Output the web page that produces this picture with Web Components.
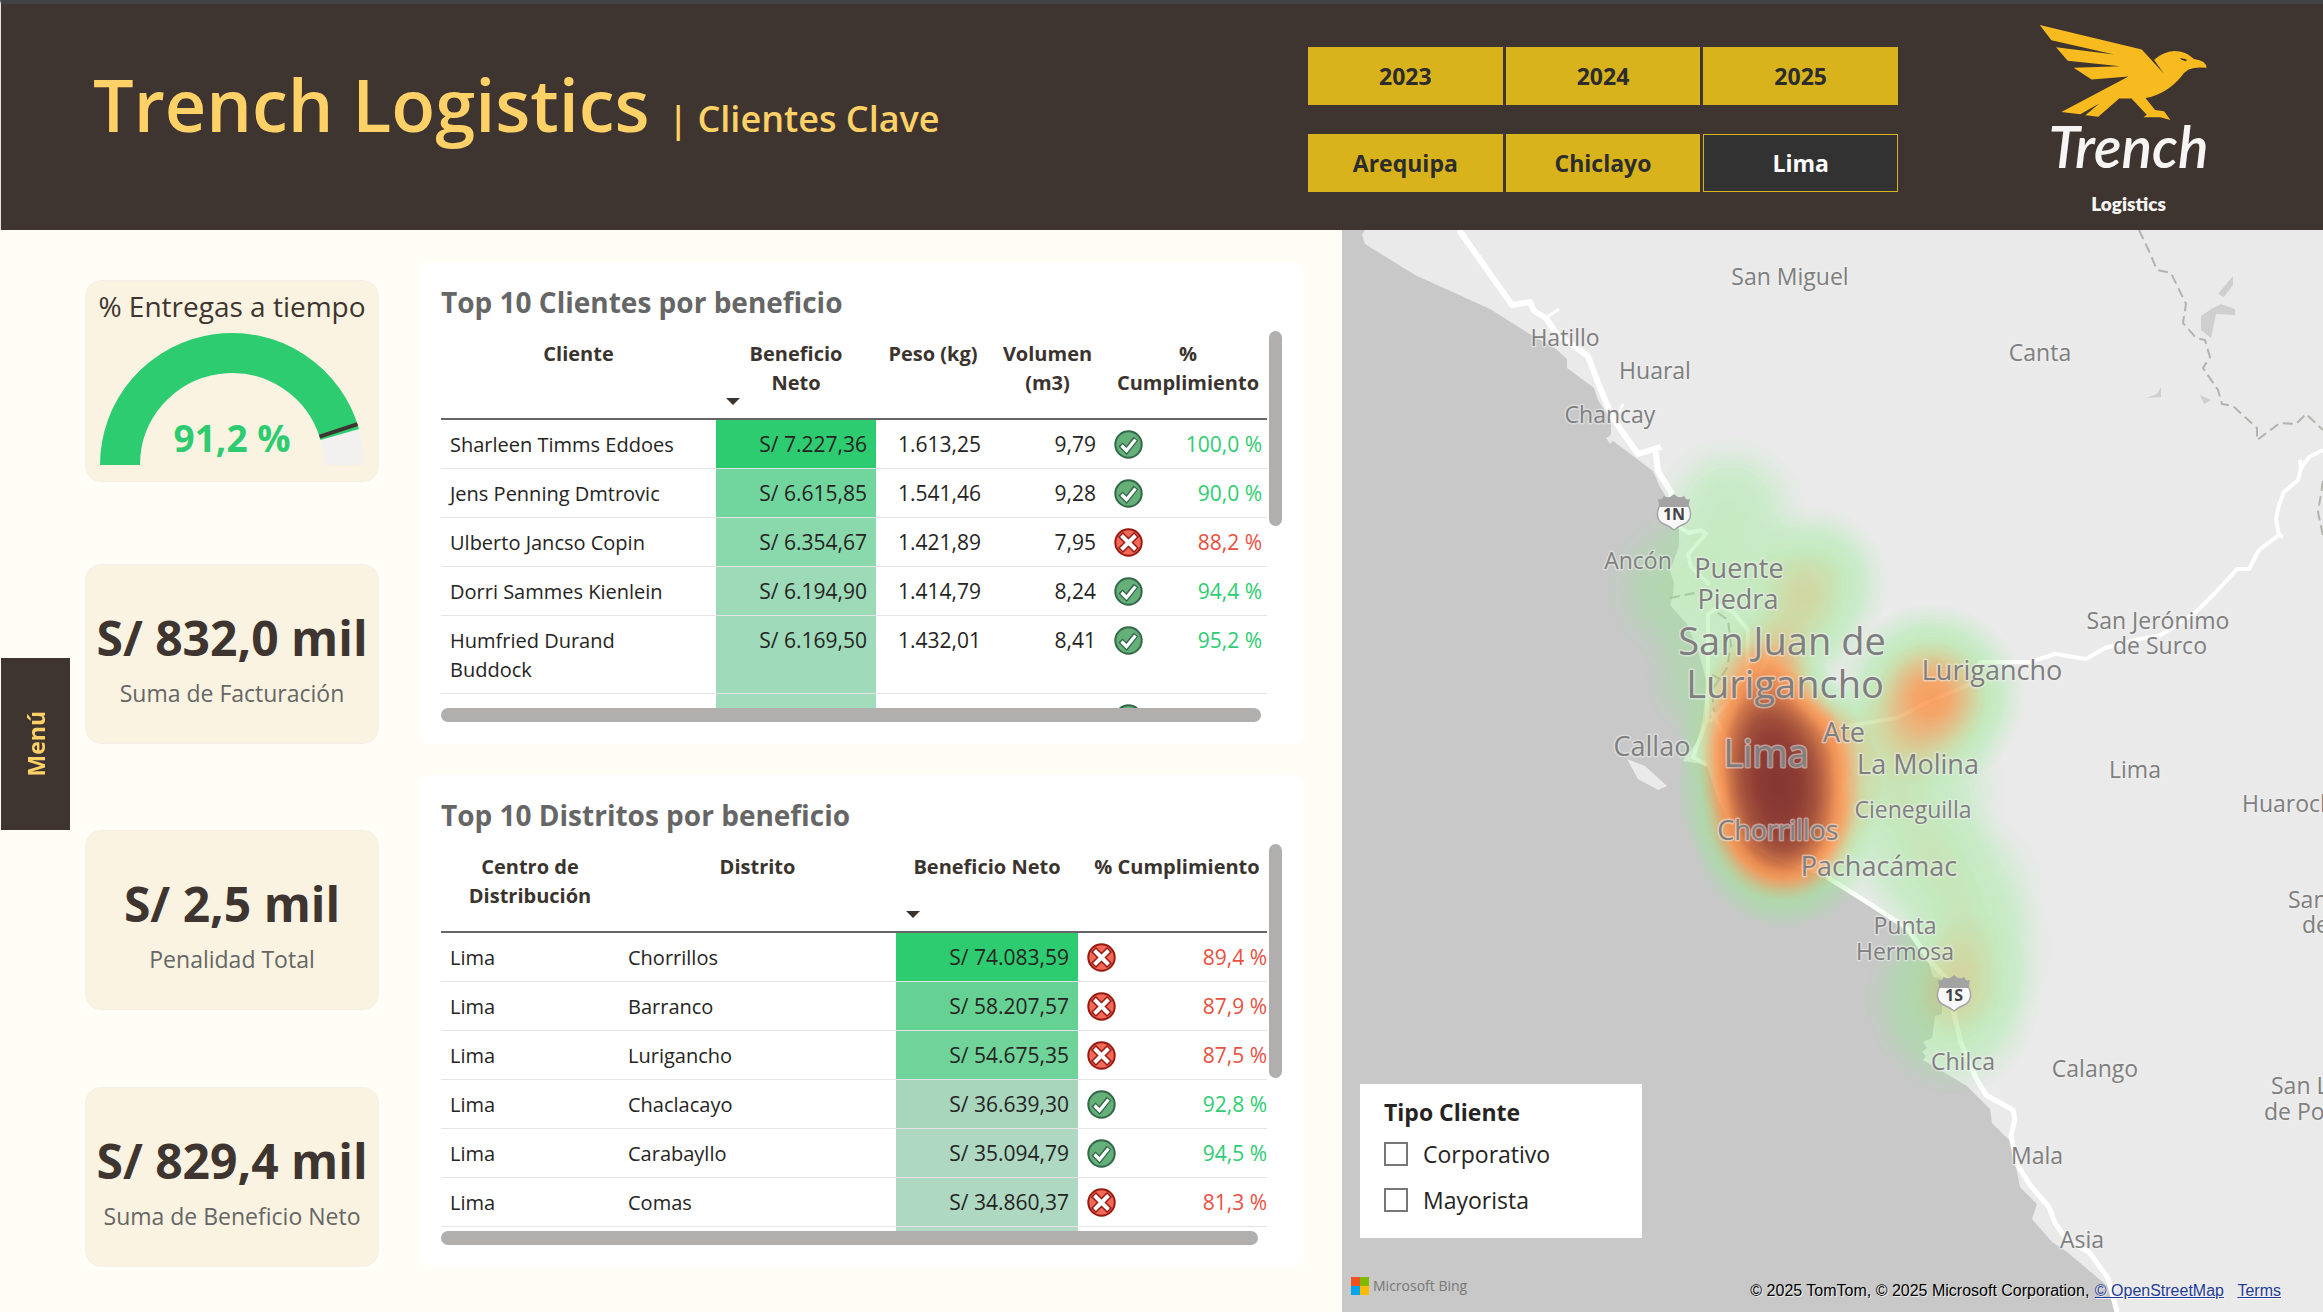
<!DOCTYPE html>
<html lang="es">
<head>
<meta charset="utf-8">
<title>Trench Logistics | Clientes Clave</title>
<style>
  body { margin: 0; background: #fffdf6; font-family: "Open Sans", "Noto Sans", sans-serif; color: #252423; }
</style>
</head>
<body>
<trench-dashboard></trench-dashboard>

<script>
const define = (name, html, setup) => customElements.define(name, class extends HTMLElement {
  connectedCallback() {
    if (this.shadowRoot) return;
    const t = document.createElement('template');
    t.innerHTML = typeof html === 'function' ? html(this) : html;
    this.attachShadow({ mode: 'open' }).append(t.content.cloneNode(true));
    if (setup) setup(this);
  }
});

/* ---------- status icon ---------- */
define('status-icon', el => `
<style>:host{display:block;width:29px;height:29px}svg{display:block;width:100%;height:100%}</style>
${el.getAttribute('kind') === 'ok'
  ? `<svg viewBox="0 0 29 29" role="img" aria-label="Cumple"><circle cx="14.500" cy="14.500" r="13.200" fill="#64b078" stroke="#33684a" stroke-width="2"/>
     <path d="M6.500 14.500L12.500 20.500L22 8.500" fill="none" stroke="#33684a" stroke-width="6"/>
     <path d="M7.500 15.500L12.500 20.500L21.500 9.500" fill="none" stroke="#fff" stroke-width="3.200"/></svg>`
  : `<svg viewBox="0 0 29 29" role="img" aria-label="No cumple"><circle cx="14.500" cy="14.500" r="13.200" fill="#f2695a" stroke="#98190f" stroke-width="2"/>
     <path d="M6.500 6.500L22.500 22.500M22.500 6.500L6.500 22.500" stroke="#98190f" stroke-width="7"/>
     <path d="M7.500 7.500L21.500 21.500M21.500 7.500L7.500 21.500" stroke="#fff" stroke-width="4"/></svg>`}`);

/* ---------- slicer made of tiles ---------- */
define('tile-slicer', el => `
<style>
:host{display:grid;grid-template-columns:repeat(3,1fr);gap:3px}
button{height:58px;padding:0;border:1px solid #d9b31c;background:#d9b31c;color:#2c2c2c;font:700 23px/30px "Open Sans",sans-serif;cursor:pointer}
button[aria-pressed=true]{background:#323232;color:#fff}
</style>
${el.getAttribute('items').split(',').map(i => `<button type="button" aria-pressed="${i === el.getAttribute('selected')}">${i}</button>`).join('')}`);

/* ---------- brand logo ---------- */
define('trench-logo', `
<style>
:host{display:flex;flex-direction:column;align-items:center;color:#f6f5f4;font-family:Lato,sans-serif}
svg{width:173px;height:103px;display:block;overflow:visible}
.name{font:italic 600 57px/64px Lato,sans-serif;margin-top:-10px}
.sub{font:800 19px/24px Lato,sans-serif;margin-top:14px}
</style>
<svg viewBox="155 63 520 310" aria-hidden="true">
<path fill="#f8bb1f" d="M148 75L455 149L521 221L492 180Q520 154 553 153Q588 153 612 177Q650 182 650 204Q618 200 596 209Q582 217 572 232Q530 282 466 295L495 331L522 335L541 361L510 353H460L470 345L424 296H387L324 351L285 347L327 311L270 344L213 337L415 230L304 239L250 204L390 199L232 183L197 142L372 164L183 121Z"/>
<path fill="#3e3530" d="M569 175Q582 174 591 180L588 184Q576 183 569 175Z"/></svg>
<span class="name">Trench</span><span class="sub">Logistics</span>`);

/* ---------- header ---------- */
define('app-header', `
<style>
:host{display:flex;box-sizing:border-box;min-height:230px;border-top:4px solid #424244;border-left:1px solid #e8e4dc;background:#3e3530;color:#ffd166;align-items:flex-start}
h1{flex:1;margin:48px 0 0 92px;font-weight:600;font-size:72px;line-height:104px;white-space:nowrap}
h1 small{font-size:36px;font-weight:600}
.filters{flex:none;width:590px;display:grid;gap:29px;margin-top:43px}
.brand{flex:none;width:425px;display:flex;justify-content:center;margin-top:17px}
trench-logo{margin-left:36px}
</style>
<h1>Trench Logistics <small>| Clientes Clave</small></h1>
<div class="filters">
<tile-slicer items="2023,2024,2025"></tile-slicer>
<tile-slicer items="Arequipa,Chiclayo,Lima" selected="Lima"></tile-slicer>
</div>
<div class="brand"><trench-logo></trench-logo></div>`);

/* ---------- KPI cards ---------- */
define('kpi-card', el => `
<style>
:host{display:flex;flex-direction:column;align-items:center;box-sizing:border-box;height:180px;padding-top:40px;border:1px solid #f6f1e8;border-radius:16px;background:#faf3e1;white-space:nowrap}
b{font-size:48px;line-height:66px;color:#3e3530}
span{font-size:23px;line-height:32px;color:#666;margin-top:6px}
</style><b>${el.getAttribute('value')}</b><span><slot></slot></span>`);

define('gauge-card', `
<style>
:host{display:flex;flex-direction:column;align-items:center;box-sizing:border-box;height:202px;padding-top:5px;border:1px solid #f6f1e8;border-radius:16px;background:#faf3e1;white-space:nowrap}
h2{margin:0;font-size:28px;font-weight:400;line-height:40px;color:#3e3530}
svg{display:block;width:264px;height:132px;margin-top:7px;overflow:visible}
text{font-size:37px;font-weight:700;fill:#2ecc71;text-anchor:middle}
</style>
<h2>% Entregas a tiempo</h2>
<svg viewBox="-132 -132 264 132">
<path d="M-112 0A112 112 0 0 1 112 0" fill="none" stroke="#f2f1f0" stroke-width="40"/>
<path d="M-112 0A112 112 0 0 1 107.750 -30.560" fill="none" stroke="#2ecc71" stroke-width="40"/>
<path d="M87.500 -28.430L125.500 -40.790" stroke="#3e3530" stroke-width="4"/>
<text x="0" y="-13">91,2 %</text></svg>`);

/* ---------- data tables ---------- */
define('data-panel', '', el => {
  const d = DATA[el.getAttribute('source')];
  const cell = (v, i, row) => {
    const k = d.kinds[i];
    if (k === 'bar') return `<td class="n" style="background:${row.shade}">${v}</td>`;
    if (k === 'pct') return `<td class="n"><div class="p ${row.ok ? 'ok' : 'ko'}"><status-icon kind="${row.ok ? 'ok' : 'ko'}"></status-icon><span>${v}</span></div></td>`;
    return `<td class="${k === 'num' ? 'n' : ''}">${v}</td>`;
  };
  el.shadowRoot.innerHTML = `
<style>
:host{display:block;box-sizing:border-box;padding:22px;background:#fff;border-radius:12px}
h2{margin:0 0 11px;font-size:28px;line-height:36px;font-weight:700;color:#666}
.grid{display:grid;grid-template-columns:minmax(0,1fr) 13px;column-gap:2px}
.view{height:${d.view}px;overflow:hidden}
table{width:${d.width};table-layout:fixed;border-collapse:separate;border-spacing:0;font-size:20px;line-height:29px}
th{box-sizing:border-box;height:89px;padding:8px 2px 0;vertical-align:top;font-weight:700;color:#3a332e;border-bottom:2px solid #666;position:relative;white-space:pre-line}
th i{position:absolute;left:10px;bottom:13px;border:7px solid transparent;border-top-color:#3a332e;border-bottom:0}
td{box-sizing:border-box;height:49px;padding:10px 9px 9px;vertical-align:top;border-bottom:1px solid #e4e4e4}
.n{text-align:right;white-space:nowrap;font-size:21px}
.p{display:flex;justify-content:space-between}
.ok{color:#2ecc71}.ko{color:#e8503f}
.bar{background:#b0afae;border-radius:7px}
.v{height:${d.v}px}
.h{height:14px;width:${d.h}}
</style>
<h2>${d.title}</h2>
<div class="grid"><div class="view"><table>
<colgroup>${d.cols.map(c => `<col style="width:${c / d.cols.reduce((a, b) => a + b) * 100}%">`).join('')}</colgroup>
<thead><tr>${d.head.map((h, i) => `<th scope="col">${h}${d.kinds[i] === 'bar' ? '<i></i>' : ''}</th>`).join('')}</tr></thead>
<tbody>${d.rows.map(r => `<tr>${r.c.map((v, i) => cell(v, i, r)).join('')}</tr>`).join('')}</tbody>
</table></div><div class="bar v"></div><div class="bar h"></div></div>`;
});

const DATA = {
  clientes: {
    title: 'Top 10 Clientes por beneficio', view: 377, v: 195, h: 'calc(100% - 6px)', width: 'calc(100% + 4px)',
    cols: [275, 160, 114, 115, 166],
    kinds: ['txt', 'bar', 'num', 'num', 'pct'],
    head: ['Cliente', 'Beneficio\nNeto', 'Peso (kg)', 'Volumen\n(m3)', '%\nCumplimiento'],
    rows: [
      { c: ['Sharleen Timms Eddoes', 'S/ 7.227,36', '1.613,25', '9,79', '100,0 %'], ok: 1, shade: '#2ecc71' },
      { c: ['Jens Penning Dmtrovic', 'S/ 6.615,85', '1.541,46', '9,28', '90,0 %'], ok: 1, shade: '#71d69d' },
      { c: ['Ulberto Jancso Copin', 'S/ 6.354,67', '1.421,89', '7,95', '88,2 %'], ok: 0, shade: '#8ad9ac' },
      { c: ['Dorri Sammes Kienlein', 'S/ 6.194,90', '1.414,79', '8,24', '94,4 %'], ok: 1, shade: '#9ddab8' },
      { c: ['Humfried Durand<br>Buddock', 'S/ 6.169,50', '1.432,01', '8,41', '95,2 %'], ok: 1, shade: '#9fdaba' },
      { c: ['', '', '', '', ''], ok: 1, shade: '#a3dbbd' }
    ]
  },
  distritos: {
    title: 'Top 10 Distritos por beneficio', view: 387, v: 234, h: 'calc(100% - 9px)', width: 'calc(100% + 9px)',
    cols: [178, 277, 182, 198],
    kinds: ['txt', 'txt', 'bar', 'pct'],
    head: ['Centro de\nDistribución', 'Distrito', 'Beneficio Neto', '% Cumplimiento'],
    rows: [
      { c: ['Lima', 'Chorrillos', 'S/ 74.083,59', '89,4 %'], ok: 0, shade: '#2ecc71' },
      { c: ['Lima', 'Barranco', 'S/ 58.207,57', '87,9 %'], ok: 0, shade: '#65d193' },
      { c: ['Lima', 'Lurigancho', 'S/ 54.675,35', '87,5 %'], ok: 0, shade: '#6fd39a' },
      { c: ['Lima', 'Chaclacayo', 'S/ 36.639,30', '92,8 %'], ok: 1, shade: '#a8d6bd' },
      { c: ['Lima', 'Carabayllo', 'S/ 35.094,79', '94,5 %'], ok: 1, shade: '#aed8c1' },
      { c: ['Lima', 'Comas', 'S/ 34.860,37', '81,3 %'], ok: 0, shade: '#afd8c2' },
      { c: ['', '', '', ''], ok: 1, shade: '#b1d9c4' }
    ]
  }
};

/* ---------- heat map ---------- */
const LABELS = [
  [1790, 285, 's', 'San Miguel'], [1565, 346, 's', 'Hatillo'], [1655, 379, 's', 'Huaral'], [1610, 423, 's', 'Chancay'],
  [2040, 361, 's', 'Canta'], [1638, 569, 's', 'Ancón'], [1739, 578, 'm', 'Puente'], [1738, 609, 'm', 'Piedra'],
  [1782, 655, 'l', 'San Juan de'], [1785, 698, 'l', 'Lurigancho'], [1992, 680, 'm', 'Lurigancho'],
  [2158, 629, 's', 'San Jerónimo'], [2160, 654, 's', 'de Surco'], [1652, 756, 'm', 'Callao'], [1766, 767, 'l', 'Lima'],
  [1844, 742, 'm', 'Ate'], [1918, 774, 'm', 'La Molina'], [2135, 778, 's', 'Lima'], [1913, 818, 's', 'Cieneguilla'],
  [1778, 840, 'm', 'Chorrillos'], [1879, 876, 'm', 'Pachacámac'], [2242, 812, 's a', 'Huaroch'],
  [2288, 908, 's a', 'San'], [2302, 933, 's a', 'de'], [1905, 934, 's', 'Punta'], [1905, 960, 's', 'Hermosa'],
  [1963, 1070, 's', 'Chilca'], [2095, 1077, 's', 'Calango'], [2271, 1094, 's a', 'San L'], [2264, 1120, 's a', 'de Po'],
  [2037, 1164, 's', 'Mala'], [2082, 1248, 's', 'Asia']
];
/* x, y, radius x, radius y, weight */
const HEAT = [
  [1730, 512, 80, 80, .17], [1811, 584, 80, 80, .3], [1685, 588, 84, 84, .18], [1750, 590, 70, 80, .1],
  [1795, 640, 70, 60, .18], [1710, 675, 70, 80, .16], [1764, 674, 64, 66, .42],
  [1931, 697, 94, 94, .53], [1768, 738, 90, 94, .78], [1779, 785, 104, 116, .86], [1784, 832, 92, 98, .76],
  [1825, 735, 66, 60, .14], [1865, 765, 90, 90, .2], [1925, 790, 88, 88, .14], [1915, 850, 88, 80, .15],
  [1960, 890, 88, 88, .17], [1975, 950, 84, 84, .14], [1952, 1000, 90, 98, .29]
];
const shield = (x, y, t) => `<g transform="translate(${x} ${y})">
<path d="M-15 -13Q-11 -12 -10 -16Q-5 -13 0 -18Q5 -13 10 -16Q11 -12 15 -13L14 -8Q20 4 12 10Q5 13 0 17Q-5 13 -12 10Q-20 4 -14 -8Z" fill="#f8f8f8" stroke="#a6a6a6" stroke-width="1.500"/>
<path d="M-15 -13Q-11 -12 -10 -16Q-5 -13 0 -18Q5 -13 10 -16Q11 -12 15 -13L15 -6H-15Z" fill="#a3a3a3"/>
<text class="sh" y="7">${t}</text></g>`;

define('heat-map', () => `
<style>
:host{display:grid;overflow:hidden;background:#eaeaea;position:relative;min-width:0}
.map{position:absolute;inset:0;width:100%;height:100%}
text{fill:#7f7f7f;text-anchor:middle;paint-order:stroke;stroke:rgba(240,240,240,.5);stroke-width:3px;stroke-linejoin:round}
.s{font-size:23px}.m{font-size:27px}.l{font-size:38px}.a{text-anchor:start}
.sh{font-size:16px;font-weight:700;fill:#444;stroke:none}
.road{fill:none;stroke:#fff;stroke-linejoin:round}
.over{position:relative;display:flex;flex-direction:column;justify-content:flex-end;padding:0 42px 11px 9px}
client-filter{align-self:flex-start;margin:0 0 38px 9px}
footer{display:flex;justify-content:space-between;align-items:flex-end;line-height:20px}
.bing{display:flex;align-items:center;gap:4px;font-size:14px;color:#777;padding-bottom:5px}
.bing svg{width:18px;height:18px}
.copy{font:16px/20px "Liberation Sans",sans-serif;color:#000;text-shadow:1px 1px 0 rgba(255,255,255,.7)}
a{color:#233b96;margin-left:1px}a+a{margin-left:9px}
</style>
<svg class="map" viewBox="1342 230 981 1082" preserveAspectRatio="xMinYMin slice" aria-label="Mapa de calor de Lima">
<defs>
<radialGradient id="blob"><stop offset="0" stop-color="#fff"/><stop offset=".2" stop-color="#fff" stop-opacity=".9"/><stop offset=".4" stop-color="#fff" stop-opacity=".68"/><stop offset=".6" stop-color="#fff" stop-opacity=".4"/><stop offset=".8" stop-color="#fff" stop-opacity=".14"/><stop offset="1" stop-color="#fff" stop-opacity="0"/></radialGradient>
<filter id="ramp" x="0" y="0" width="1" height="1" color-interpolation-filters="sRGB">
<feComponentTransfer in="SourceGraphic" result="tint">
<feFuncR type="table" tableValues=".56 .56 .6 .72 .88 .98 .93 .78 .63 .52 .43"/>
<feFuncG type="table" tableValues=".93 .93 .91 .8 .65 .56 .5 .38 .26 .16 .1"/>
<feFuncB type="table" tableValues=".56 .56 .54 .42 .32 .25 .23 .19 .15 .12 .1"/></feComponentTransfer>
<feColorMatrix in="SourceGraphic" type="matrix" values="0 0 0 0 1  0 0 0 0 1  0 0 0 0 1  1 0 0 0 0" result="level"/>
<feComponentTransfer in="level" result="mask"><feFuncA type="table" tableValues="0 .33 .46 .53 .64 .78 .84 .87 .88 .89 .9"/></feComponentTransfer>
<feComposite in="tint" in2="mask" operator="in"/></filter>
</defs>
<path fill="#c8c8c8" d="M1342 230H1365L1362 235L1365 244L1415 275L1490 309L1528 333L1556 349L1567 359V368L1594 388L1598 400L1611 421V435L1606 438L1610 444L1613 441L1653 471L1660 487L1665 495L1679 530V546L1670 571L1674 583L1673 595L1670 605L1687 624L1698 650L1707 683L1703 716L1698 740L1683 761L1707 765L1717 797L1735 835L1770 858L1830 879L1870 903L1903 924L1927 957L1933 977L1942 979V1014L1935 1016L1932 1038L1923 1042L1927 1048L1922 1052L1926 1056L1923 1060L1967 1086L1990 1109L1992 1123L2011 1142L2020 1187L2037 1204L2032 1219L2052 1242L2067 1252L2111 1289L2116 1312H1342Z"/>
<path fill="#eaeaea" d="M1627 759L1645 766L1667 786L1658 790L1638 779Z"/>
<g fill="#cfcfcf"><path d="M2233 276L2218 294L2224 297L2233 285Z"/><path d="M2221 304L2235 309V315L2216 314L2211 338L2201 330V316L2213 308Z"/><path d="M2161 387V397L2146 398L2157 394Z"/><path d="M2200 395L2211 400L2204 404Z"/></g>
<g fill="none" stroke="#b3b3ae" stroke-width="2" stroke-dasharray="10 5"><path d="M2139 230L2149 251L2157 270L2171 273L2186 304L2183 323L2196 338L2205 340L2210 357L2203 368L2218 390L2222 404L2233 406L2257 428V440L2280 423L2296 424L2306 414L2323 430"/><path d="M2323 481L2318 512L2323 536"/><path d="M1670 598L1700 592M1718 613L1728 620L1731 645L1727 668L1712 690L1714 712M1712 675L1722 680"/></g>
<path class="road" stroke-width="6" d="M1459 230L1512 305L1530 302L1534 311L1546 318L1556 333L1588 356L1600 388L1611 414L1621 430L1638 454L1661 447M1655 447L1658 471L1671 492L1674 514"/>
<path class="road" stroke-width="3" d="M1546 318L1559 309M1619 413L1623 404"/>
<path class="road" stroke-width="4" d="M1677 525L1688 533L1701 530L1706 534L1688 554L1691 567L1710 585M1707 765L1693 757L1707 720L1708 675V614L1720 606L1733 612L1748 630L1747 671L1730 700L1710 722M1770 650L1760 675M1712 712L1728 742"/>
<path class="road" stroke-width="5" d="M1827 877L1873 906L1907 928L1930 961L1947 979L1953 1010L1961 1043L1976 1078L1986 1095L2013 1110L2015 1119L2011 1136L2017 1164L2030 1185L2049 1207L2055 1223L2067 1240L2089 1252L2108 1278L2117 1312"/>
<path class="road" stroke-width="4" d="M2323 450L2309 457L2301 468L2298 480L2284 492L2279 505L2276 519L2279 535L2259 550L2249 569L2237 569L2218 590L2196 612L2161 635L2136 640L2105 648L2086 659L2055 654L2030 662L1980 662L1973 683L1930 701L1897 718L1847 726M2301 468L2300 460M2279 535L2283 537"/>
<g filter="url(#ramp)"><rect x="1342" y="230" width="981" height="1082" fill="#000"/>
${HEAT.map(([x, y, a, b, w]) => `<ellipse cx="${x}" cy="${y}" rx="${a}" ry="${b}" fill="url(#blob)" opacity="${w}"/>`).join('')}</g>
${LABELS.map(([x, y, c, t]) => `<text x="${x}" y="${y}" class="${c}">${t}</text>`).join('')}
${shield(1674, 513, '1N')}${shield(1954, 994, '1S')}
</svg>
<div class="over">
<client-filter></client-filter>
<footer><span class="bing"><svg viewBox="0 0 18 18" aria-hidden="true"><path fill="#f25022" d="M0 0h9v9H0z"/><path fill="#7fba00" d="M9 0h9v9H9z"/><path fill="#00a4ef" d="M0 9h9v9H0z"/><path fill="#ffb900" d="M9 9h9v9H9z"/></svg>Microsoft Bing</span>
<span class="copy">© 2025 TomTom, © 2025 Microsoft Corporation, <a href="#osm">© OpenStreetMap</a> <a href="#terms">Terms</a></span></footer>
</div>`);

define('client-filter', `
<style>
:host{display:block;box-sizing:border-box;width:282px;height:154px;background:#fff;padding:13px 24px}
fieldset{border:0;margin:0;padding:0}
legend{padding:0;font-size:23px;font-weight:700;line-height:30px;margin-bottom:12px}
label{display:flex;align-items:center;gap:15px;font-size:23px;line-height:30px;margin-bottom:16px}
input{appearance:none;box-sizing:border-box;width:24px;height:24px;margin:0;border:2px solid #777;background:#fff}
</style>
<fieldset><legend>Tipo Cliente</legend>
<label><input type="checkbox" name="corporativo">Corporativo</label>
<label><input type="checkbox" name="mayorista">Mayorista</label></fieldset>`);

/* ---------- page ---------- */
define('trench-dashboard', `
<style>
:host{display:flex;flex-direction:column;min-height:100vh}
main{flex:1;display:grid;grid-template-columns:85px minmax(0,294fr) minmax(0,963fr) minmax(0,981fr)}
nav{display:flex;align-items:center;padding:0 0 54px 1px}
nav button{width:69px;height:172px;border:0;padding:0;background:#3e3530;color:#ffd166;font:700 23px/30px "Open Sans",sans-serif;display:flex;align-items:center;justify-content:center}
nav span{writing-mode:vertical-rl;transform:rotate(180deg)}
.kpis{padding-top:50px}
.kpis>:nth-child(2){margin-top:82px}
.kpis>:nth-child(3){margin-top:86px}
.kpis>:nth-child(4){margin-top:77px}
.tables{display:flex;flex-direction:column;gap:31px;padding:32px 38px 44px 40px}
</style>
<app-header></app-header>
<main>
<nav><button type="button"><span>Menú</span></button></nav>
<section class="kpis">
<gauge-card></gauge-card>
<kpi-card value="S/ 832,0 mil">Suma de Facturación</kpi-card>
<kpi-card value="S/ 2,5 mil">Penalidad Total</kpi-card>
<kpi-card value="S/ 829,4 mil">Suma de Beneficio Neto</kpi-card>
</section>
<section class="tables">
<data-panel source="clientes"></data-panel>
<data-panel source="distritos"></data-panel>
</section>
<heat-map></heat-map>
</main>`);
</script>
</body>
</html>
